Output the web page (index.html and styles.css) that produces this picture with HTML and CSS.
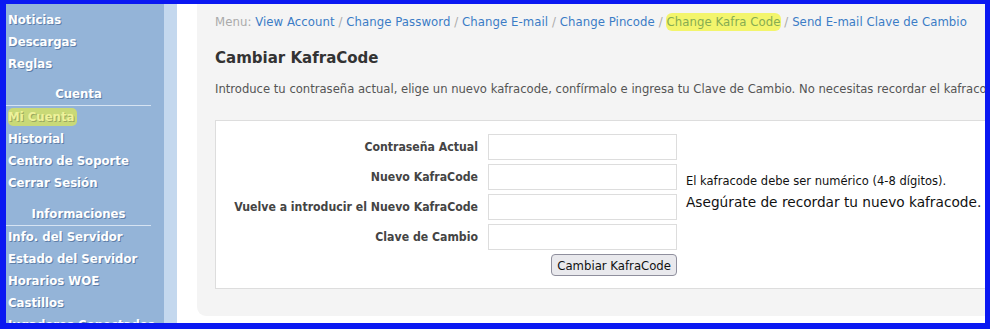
FILE: index.html
```html
<!DOCTYPE html>
<html lang="es">
<head>
<meta charset="utf-8">
<title>Cambiar KafraCode</title>
<link rel="stylesheet" href="styles.css">
</head>
<body>
<div class="frame">
  <nav class="sidebar">
    <a class="nav-item" href="#">Noticias</a>
    <a class="nav-item" href="#">Descargas</a>
    <a class="nav-item" href="#">Reglas</a>
    <div class="nav-head">Cuenta</div>
    <a class="nav-item" href="#"><span class="mark-side">Mi Cuenta</span></a>
    <a class="nav-item" href="#">Historial</a>
    <a class="nav-item" href="#">Centro de Soporte</a>
    <a class="nav-item" href="#">Cerrar Sesión</a>
    <div class="nav-head second">Informaciones</div>
    <a class="nav-item" href="#">Info. del Servidor</a>
    <a class="nav-item" href="#">Estado del Servidor</a>
    <a class="nav-item" href="#">Horarios WOE</a>
    <a class="nav-item" href="#">Castillos</a>
    <a class="nav-item" href="#">Jugadores Conectados</a>
  </nav>
  <div class="strip"></div>
  <div class="spacer"></div>
  <main class="main">
    <div class="crumbs"><span class="crumb-label">Menu:</span> <a href="#">View Account</a> <span class="sep">/</span> <a href="#">Change Password</a> <span class="sep">/</span> <a href="#">Change E-mail</a> <span class="sep">/</span> <a href="#">Change Pincode</a> <span class="sep">/</span> <a class="current" href="#">Change Kafra Code</a> <span class="sep">/</span> <a href="#">Send E-mail Clave de Cambio</a></div>
    <h2 class="title">Cambiar KafraCode</h2>
    <p class="desc">Introduce tu contraseña actual, elige un nuevo kafracode, confírmalo e ingresa tu Clave de Cambio. No necesitas recordar el kafracode anterior.</p>
    <div class="form-box">
      <form class="form-grid">
        <label class="lbl r1">Contraseña Actual</label>
        <input class="field r1" type="password">
        <label class="lbl r2">Nuevo KafraCode</label>
        <input class="field r2" type="password">
        <label class="lbl r3">Vuelve a introducir el Nuevo KafraCode</label>
        <input class="field r3" type="password">
        <label class="lbl r4">Clave de Cambio</label>
        <input class="field r4" type="password">
        <div class="notes">
          <div class="note-small">El kafracode debe ser numérico (4-8 dígitos).</div>
          <div class="note-big">Asegúrate de recordar tu nuevo kafracode.</div>
        </div>
        <div class="btn-cell"><button class="btn" type="button">Cambiar KafraCode</button></div>
      </form>
    </div>
  </main>
</div>
</body>
</html>
```

FILE: styles.css
```css
html, body {
  margin: 0;
  padding: 0;
  background: #ffffff;
}

.frame {
  box-sizing: border-box;
  width: 990px;
  height: 329px;
  border-style: solid;
  border-color: #0a18f2;
  border-width: 4px 5px 6px 6px;
  display: flex;
  overflow: hidden;
  background: #ffffff;
}

.sidebar {
  flex: 0 0 145px;
  width: 145px;
  padding: 5px 13px 0 0;
  background: #94b4d8;
  display: flex;
  flex-direction: column;
  font-family: "DejaVu Sans Condensed", "DejaVu Sans", sans-serif;
  font-weight: bold;
  font-size: 13px;
  white-space: nowrap;
}

.nav-item {
  display: block;
  line-height: 22px;
  height: 22px;
  padding-left: 2px;
  color: #ffffff;
  text-decoration: none;
  text-shadow: 1px 1px 0 #5f7fa8;
}

.mark-side {
  color: #eef29a;
  background: #c9d977;
  border-radius: 5px;
  padding: 1px 3px 2px 0;
  text-shadow: 1px 1px 0 #9aa860;
}

.nav-head {
  margin-top: 8px;
  height: 22px;
  line-height: 22px;
  text-align: center;
  color: #ffffff;
  border-bottom: 1px solid #d6e3f2;
  text-shadow: 1px 1px 0 #5f7fa8;
}

.nav-head.second {
  margin-top: 9px;
}

.strip {
  flex: 0 0 13px;
  background: #c4d8ee;
}

.spacer {
  flex: 0 0 20px;
  background: #ffffff;
}

.main {
  flex: 1 1 auto;
  min-width: 0;
  margin-bottom: 7px;
  padding: 8px 0 0 18px;
  background: #f4f4f4;
  border-bottom-left-radius: 9px;
  overflow: hidden;
  font-family: "DejaVu Sans Condensed", "DejaVu Sans", sans-serif;
  color: #555555;
}

.crumbs {
  font-size: 13px;
  letter-spacing: 0.07px;
  line-height: 20px;
  white-space: nowrap;
  color: #aaaaaa;
}

.crumbs a {
  color: #3b7cc6;
  text-decoration: none;
}

.crumb-label,
.sep {
  color: #aaaaaa;
}

.crumbs a.current {
  color: #86ac52;
  background: #f3f56c;
  border-radius: 6px;
  padding: 1px 0 2px 0;
}

.title {
  margin: 13px 0 0 0;
  font-size: 16.7px;
  line-height: 24px;
  font-weight: bold;
  color: #333333;
}

.desc {
  margin: 10px 0 0 0;
  font-size: 12.9px;
  line-height: 20px;
  white-space: nowrap;
}

.form-box {
  margin-top: 21px;
  width: 900px;
  background: #ffffff;
  border: 1px solid #dddddd;
  padding: 13px 0 12px 0;
}

.form-grid {
  display: grid;
  grid-template-columns: 262px 189px auto;
  grid-template-rows: 26px 26px 26px 26px 22px;
  column-gap: 10px;
  row-gap: 4px;
  margin: 0;
}

.lbl {
  grid-column: 1;
  text-align: right;
  font-size: 12.2px;
  font-weight: bold;
  color: #444444;
  line-height: 26px;
  white-space: nowrap;
}

.r1 { grid-row: 1; }
.r2 { grid-row: 2; }
.r3 { grid-row: 3; }
.r4 { grid-row: 4; }

.field {
  grid-column: 2;
  box-sizing: border-box;
  width: 189px;
  height: 26px;
  margin: 0;
  border: 1px solid #dddddd;
  background: #ffffff;
  padding: 2px 4px;
}

.notes {
  grid-column: 3;
  grid-row: 1 / 5;
  align-self: center;
  margin-left: -1px;
  color: #111111;
  white-space: nowrap;
  font-family: "DejaVu Sans", sans-serif;
}

.note-small {
  font-size: 11.5px;
  line-height: 20px;
}

.note-big {
  font-size: 13.7px;
  line-height: 22px;
}

.btn-cell {
  grid-column: 2;
  grid-row: 5;
  display: flex;
  justify-content: flex-end;
}

.btn {
  box-sizing: border-box;
  height: 22px;
  margin: 0;
  padding: 0 5px;
  font-family: "DejaVu Sans Condensed", "DejaVu Sans", sans-serif;
  font-size: 13px;
  color: #111111;
  background: #e9e9ed;
  border: 1px solid #8f8f9d;
  border-radius: 4px;
}
```
